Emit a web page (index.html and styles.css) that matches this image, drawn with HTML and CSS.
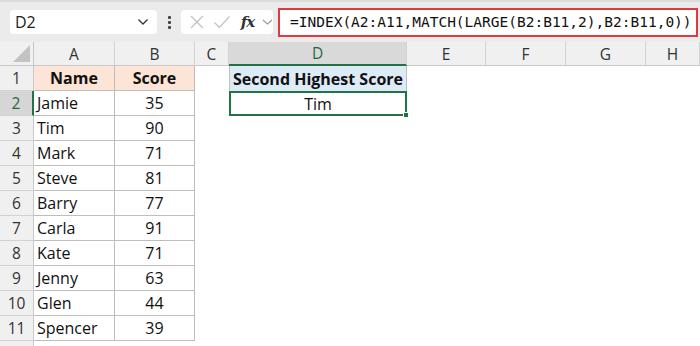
FILE: index.html
```html
<!DOCTYPE html>
<html>
<head>
<meta charset="utf-8">
<link rel="stylesheet" href="styles.css">
</head>
<body>
<div class="toolbar">
  <div class="namebox"><span>D2</span>
    <svg class="chev" width="12" height="8" viewBox="0 0 12 8"><path d="M1.5 1.5 L6 6 L10.5 1.5" fill="none" stroke="#333" stroke-width="1.3"/></svg>
  </div>
  <div class="dots"><i></i><i></i><i></i></div>
  <div class="controls">
    <svg width="16" height="16" viewBox="0 0 16 16"><path d="M2 2 L14 14 M14 2 L2 14" stroke="#c4c4c4" stroke-width="1.3" fill="none"/></svg>
    <svg width="18" height="16" viewBox="0 0 18 16"><path d="M1.5 8.5 L6.5 13.5 L16.5 2.5" stroke="#c4c4c4" stroke-width="1.3" fill="none"/></svg>
    <span class="fx">fx</span>
    <svg width="11" height="8" viewBox="0 0 11 8"><path d="M1 2 L5.5 6 L10 2" fill="none" stroke="#999" stroke-width="1.1"/></svg>
  </div>
  <div class="formula">=INDEX(A2:A11,MATCH(LARGE(B2:B11,2),B2:B11,0))</div>
</div>
<div class="sheet">
  <div class="corner"><div class="tri"></div></div>
  <div class="ch">A</div><div class="ch">B</div><div class="ch">C</div><div class="ch sel">D</div><div class="ch">E</div><div class="ch">F</div><div class="ch">G</div><div class="ch">H</div>

  <div class="rh">1</div><div class="c t hd">Name</div><div class="c t hd">Score</div><div class="c"></div><div class="c d1">Second Highest Score</div><div class="c"></div><div class="c"></div><div class="c"></div><div class="c"></div>
  <div class="rh rsel">2</div><div class="c t">Jamie</div><div class="c t n">35</div><div class="c"></div><div class="c d2">Tim<span class="handle"></span></div><div class="c"></div><div class="c"></div><div class="c"></div><div class="c"></div>
  <div class="rh">3</div><div class="c t">Tim</div><div class="c t n">90</div><div class="c"></div><div class="c"></div><div class="c"></div><div class="c"></div><div class="c"></div><div class="c"></div>
  <div class="rh">4</div><div class="c t">Mark</div><div class="c t n">71</div><div class="c"></div><div class="c"></div><div class="c"></div><div class="c"></div><div class="c"></div><div class="c"></div>
  <div class="rh">5</div><div class="c t">Steve</div><div class="c t n">81</div><div class="c"></div><div class="c"></div><div class="c"></div><div class="c"></div><div class="c"></div><div class="c"></div>
  <div class="rh">6</div><div class="c t">Barry</div><div class="c t n">77</div><div class="c"></div><div class="c"></div><div class="c"></div><div class="c"></div><div class="c"></div><div class="c"></div>
  <div class="rh">7</div><div class="c t">Carla</div><div class="c t n">91</div><div class="c"></div><div class="c"></div><div class="c"></div><div class="c"></div><div class="c"></div><div class="c"></div>
  <div class="rh">8</div><div class="c t">Kate</div><div class="c t n">71</div><div class="c"></div><div class="c"></div><div class="c"></div><div class="c"></div><div class="c"></div><div class="c"></div>
  <div class="rh">9</div><div class="c t">Jenny</div><div class="c t n">63</div><div class="c"></div><div class="c"></div><div class="c"></div><div class="c"></div><div class="c"></div><div class="c"></div>
  <div class="rh">10</div><div class="c t">Glen</div><div class="c t n">44</div><div class="c"></div><div class="c"></div><div class="c"></div><div class="c"></div><div class="c"></div><div class="c"></div>
  <div class="rh">11</div><div class="c t">Spencer</div><div class="c t n">39</div><div class="c"></div><div class="c"></div><div class="c"></div><div class="c"></div><div class="c"></div><div class="c"></div>
  <div class="rh"></div>
</div>
</body>
</html>
```

FILE: styles.css
```css
* { box-sizing: border-box; }
html, body { margin: 0; padding: 0; background: #fff; overflow: hidden; }
body { width: 700px; height: 346px; font-family: "Open Sans", "Liberation Sans", sans-serif; color: #111; }

.toolbar {
  height: 42px;
  background: #ebebeb;
  border-top: 2px solid #dcdcdc;
  display: flex;
  align-items: center;
  padding-left: 10px;
}
.namebox {
  width: 147px; height: 24px;
  background: #fff;
  border-radius: 4px;
  display: flex; align-items: center; justify-content: space-between;
  padding: 0 8px 0 5px;
  font-size: 16px; color: #222;
}
.dots {
  width: 24px; display: flex; flex-direction: column; align-items: center; gap: 2px;
}
.dots i { width: 3px; height: 3px; background: #444; border-radius: 1px; display: block; }
.controls {
  width: 92px; height: 24px; background: #fff; border-radius: 4px;
  display: flex; align-items: center; gap: 8px; padding-left: 8px;
}
.fx { font-family: "DejaVu Serif", "Liberation Serif", serif; font-style: italic; font-weight: bold; font-size: 15px; color: #333; margin-left: 2px; letter-spacing: -1px; }
.formula {
  margin-left: 5px;
  width: 420px; height: 29px;
  background: #fff;
  border: 2px solid #e0393e;
  display: flex; align-items: center;
  padding-left: 10px;
  font-family: "DejaVu Sans Mono", "Liberation Mono", monospace;
  font-size: 14.5px; color: #111; white-space: nowrap;
}

.sheet {
  display: grid;
  grid-template-columns: 34px 81px 80px 34px 178px 79px 80px 80px 1fr;
  grid-template-rows: 24px repeat(11, 25px) 10px;
}
.corner { background: #f0f0f0; border-right: 1px solid #c8c8c8; border-bottom: 1px solid #c8c8c8; position: relative; }
.tri { position: absolute; right: 3px; bottom: 3px; width: 0; height: 0; border-left: 17px solid transparent; border-bottom: 17px solid #c2c2c2; }
.ch {
  background: #f0f0f0;
  border-right: 1px solid #d2d2d2;
  border-bottom: 1px solid #c8c8c8;
  display: flex; align-items: center; justify-content: center;
  font-size: 15.5px; color: #333;
}
.ch.sel { background: #d9d9d9; color: #1d6b3d; border-bottom: 2px solid #217346; }
.rh {
  background: #f0f0f0;
  border-right: 1px solid #c8c8c8;
  border-bottom: 1px solid #d2d2d2;
  display: flex; align-items: center; justify-content: center;
  font-size: 15.5px; color: #333;
}
.rh.rsel { background: #d6d6d6; color: #1d6b3d; border-right: 2px solid #217346; }
.c {
  display: flex; align-items: center;
  font-size: 16px; color: #111; white-space: nowrap; overflow: visible;
}
.c.t { border-right: 1px solid #bdbdbd; border-bottom: 1px solid #bdbdbd; padding-left: 3px; }
.c.n { justify-content: center; padding-left: 0; }
.c.hd { background: #fce4d6; font-weight: bold; justify-content: center; padding-left: 0; }
.c.d1 { background: #ddebf7; font-weight: bold; justify-content: center; border-right: 1px solid #c0c0c0; border-left: 1px solid #c0c0c0; }
.c.d2 { border: 2px solid #217346; justify-content: center; position: relative; }
.handle { position: absolute; right: -4px; bottom: -4px; width: 6px; height: 6px; background: #217346; border: 1px solid #fff; }
```
